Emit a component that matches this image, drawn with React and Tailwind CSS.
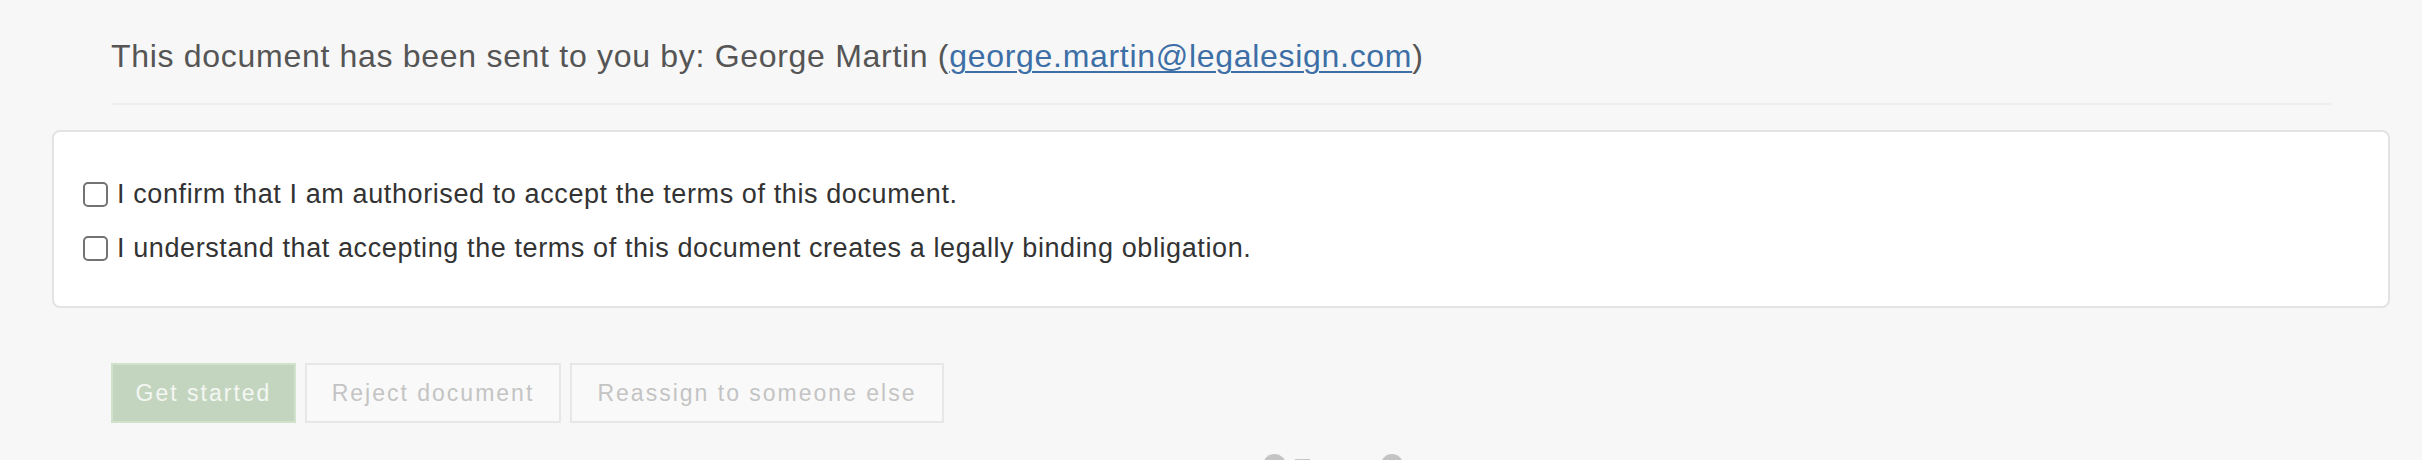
export default function App() {
  return (
    <div className="w-[2422px] h-[460px] overflow-hidden bg-[#f7f7f7] font-['Liberation_Sans',Arial,sans-serif]">
      {/* Sender header */}
      <div className="ml-[111px] mr-[91px] pt-[34px] pb-[25px] border-b-2 border-[#ededed]">
        <p className="text-[32px] leading-[44px] tracking-[0.7px] text-[#555555]">
          This document has been sent to you by: George Martin (
          <a href="#" className="text-[#3d6fa6] underline decoration-2 underline-offset-[4px]">
            george.martin@legalesign.com
          </a>
          )
        </p>
      </div>

      {/* Confirmation card */}
      <div className="ml-[52px] mr-[32px] mt-[25px] bg-white border-2 border-[#e3e3e3] rounded-[8px] pl-[29px] pt-[35px] pb-[31px]">
        <label className="h-[54px] flex items-center gap-[9px] text-[27px] tracking-[0.6px] text-[#333333]">
          <span className="w-[25px] h-[25px] shrink-0 rounded-[5px] border-2 border-[#737373] bg-white" />
          I confirm that I am authorised to accept the terms of this document.
        </label>
        <label className="h-[54px] flex items-center gap-[9px] text-[27px] tracking-[0.6px] text-[#333333]">
          <span className="w-[25px] h-[25px] shrink-0 rounded-[5px] border-2 border-[#737373] bg-white" />
          I understand that accepting the terms of this document creates a legally binding obligation.
        </label>
      </div>

      {/* Actions */}
      <div className="ml-[111px] mt-[55px] flex gap-[9px]">
        <button className="w-[185px] h-[60px] bg-[#c4d5bf] border-2 border-[#cfe3ca] text-[23px] tracking-[2px] text-[#f4f7f3]">
          Get started
        </button>
        <button className="w-[256px] h-[60px] bg-[#f9f9f9] border-2 border-[#e7e7e7] text-[23px] tracking-[2px] text-[#c4c4c4]">
          Reject document
        </button>
        <button className="w-[374px] h-[60px] bg-[#f9f9f9] border-2 border-[#e7e7e7] text-[23px] tracking-[2px] text-[#c4c4c4]">
          Reassign to someone else
        </button>
      </div>

      {/* Footer mark, cut off by the frame */}
      <div className="ml-[1263px] mt-[31px] flex items-start">
        <span className="w-[23px] h-[23px] rounded-full bg-[#c4c4c4]" />
        <span className="ml-[9px] mt-[5px] w-[15px] h-[10px] bg-[#c6c6c6]" />
        <span className="ml-[71px] w-[22px] h-[22px] rounded-full bg-[#c4c4c4]" />
      </div>
    </div>
  );
}
